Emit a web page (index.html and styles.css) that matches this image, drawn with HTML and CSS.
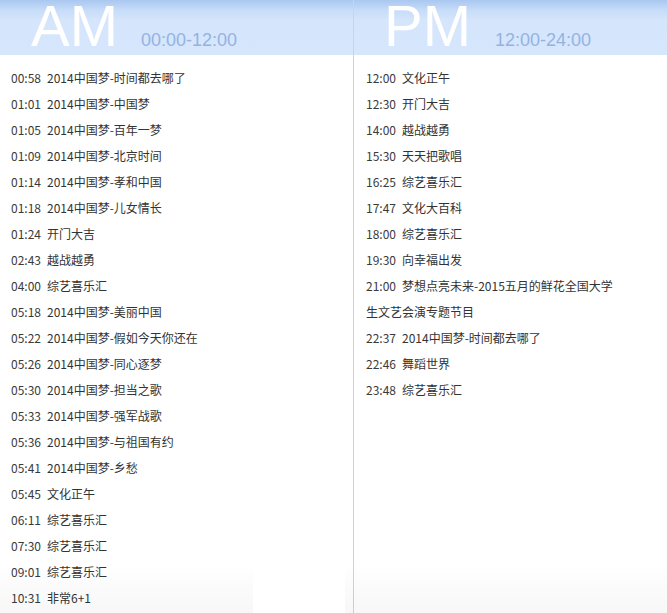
FILE: index.html
```html
<!DOCTYPE html>
<html lang="zh-CN">
<head>
<meta charset="utf-8">
<title>节目单</title>
<link rel="stylesheet" href="styles.css">
</head>
<body>
<div class="page">
  <section class="col col-am">
    <header class="head">
      <span class="ampm">AM</span>
      <span class="range">00:00-12:00</span>
    </header>
    <ul class="list">
      <li><span class="time">00:58</span>2014中国梦-时间都去哪了</li>
      <li><span class="time">01:01</span>2014中国梦-中国梦</li>
      <li><span class="time">01:05</span>2014中国梦-百年一梦</li>
      <li><span class="time">01:09</span>2014中国梦-北京时间</li>
      <li><span class="time">01:14</span>2014中国梦-孝和中国</li>
      <li><span class="time">01:18</span>2014中国梦-儿女情长</li>
      <li><span class="time">01:24</span>开门大吉</li>
      <li><span class="time">02:43</span>越战越勇</li>
      <li><span class="time">04:00</span>综艺喜乐汇</li>
      <li><span class="time">05:18</span>2014中国梦-美丽中国</li>
      <li><span class="time">05:22</span>2014中国梦-假如今天你还在</li>
      <li><span class="time">05:26</span>2014中国梦-同心逐梦</li>
      <li><span class="time">05:30</span>2014中国梦-担当之歌</li>
      <li><span class="time">05:33</span>2014中国梦-强军战歌</li>
      <li><span class="time">05:36</span>2014中国梦-与祖国有约</li>
      <li><span class="time">05:41</span>2014中国梦-乡愁</li>
      <li><span class="time">05:45</span>文化正午</li>
      <li><span class="time">06:11</span>综艺喜乐汇</li>
      <li><span class="time">07:30</span>综艺喜乐汇</li>
      <li><span class="time">09:01</span>综艺喜乐汇</li>
      <li><span class="time">10:31</span>非常6+1</li>
    </ul>
  </section>
  <section class="col col-pm">
    <header class="head">
      <span class="ampm">PM</span>
      <span class="range">12:00-24:00</span>
    </header>
    <ul class="list">
      <li><span class="time">12:00</span>文化正午</li>
      <li><span class="time">12:30</span>开门大吉</li>
      <li><span class="time">14:00</span>越战越勇</li>
      <li><span class="time">15:30</span>天天把歌唱</li>
      <li><span class="time">16:25</span>综艺喜乐汇</li>
      <li><span class="time">17:47</span>文化大百科</li>
      <li><span class="time">18:00</span>综艺喜乐汇</li>
      <li><span class="time">19:30</span>向幸福出发</li>
      <li><span class="time">21:00</span><span>梦想点亮未来-2015五月的鲜花全国大学</span><br><span>生文艺会演专题节目</span></li>
      <li><span class="time">22:37</span>2014中国梦-时间都去哪了</li>
      <li><span class="time">22:46</span>舞蹈世界</li>
      <li><span class="time">23:48</span>综艺喜乐汇</li>
    </ul>
  </section>
  <div class="fade fade-left"></div>
  <div class="fade fade-right"></div>
</div>
</body>
</html>
```

FILE: styles.css
```css
html, body {
  margin: 0;
  padding: 0;
  background: #fff;
}

.page {
  position: relative;
  display: grid;
  grid-template-columns: 353px 1fr;
  height: 613px;
  overflow: hidden;
}

.col-pm {
  border-left: 1px solid #d3d3d3;
}

.head {
  display: flex;
  align-items: baseline;
  height: 55px;
  padding-left: 31px;
  background: linear-gradient(to bottom, #a9c7f0 0px, #c6dcf8 10px, #d5e5fb 20px, #d6e6fc 55px);
  font-family: "Liberation Sans", Arial, sans-serif;
}

.col-pm .head {
  padding-left: 30px;
}

.ampm {
  font-size: 58px;
  line-height: 52px;
  color: #fff;
}

.range {
  margin-left: 23px;
  font-size: 18px;
  color: #94b3e2;
}

.col-pm .range {
  margin-left: 24px;
}

.list {
  list-style: none;
  margin: 0;
  padding: 10px 0 0 11px;
  font-family: "Noto Sans CJK SC", sans-serif;
  font-size: 12px;
  color: #333;
}

.col-pm .list {
  padding-left: 12px;
}

.list li {
  line-height: 26px;
}

.time {
  display: inline-block;
  width: 36px;
  color: #3a3a3a;
}

.fade {
  position: absolute;
  bottom: 0;
  height: 48px;
  pointer-events: none;
  background: linear-gradient(to bottom, rgba(0,0,0,0) 0%, rgba(0,0,0,0.012) 30%, rgba(0,0,0,0.03) 100%);
}

.fade-left {
  left: 0;
  width: 253px;
}

.fade-right {
  left: 345px;
  right: 0;
}
```
